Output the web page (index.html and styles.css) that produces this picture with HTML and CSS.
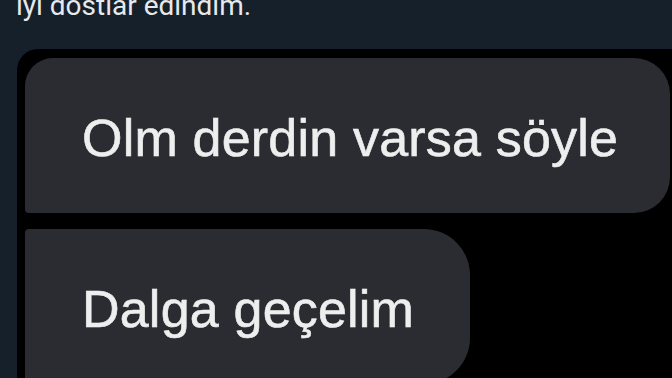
FILE: index.html
```
<!DOCTYPE html>
<html lang="en">
<head>
  <meta charset="UTF-8" />
  <meta name="viewport" content="width=device-width, initial-scale=1.0"/>
  <title>Tweet</title>
  <link rel="stylesheet" href="styles.css">
</head>
<body>

  <div class="tweet">
    <p class="tweet-text">iyi dostlar edindim.</p>

    <div class="media">
      <div class="bubble bubble--wide">
        <p class="bubble-text">Olm derdin varsa söyle</p>
      </div>
      <div class="bubble bubble--short">
        <p class="bubble-text">Dalga geçelim</p>
      </div>
    </div>
  </div>

</body>
</html>
```

FILE: styles.css
```
body {
  font-family: "Liberation Sans", Arial, sans-serif;
  background: #15202b;
  margin: 0;
  padding: 0;
  height: 100vh;
  overflow: hidden;
}

.tweet {
  display: flex;
  flex-direction: column;
}

.tweet-text {
  margin: -10px 0 0 0;
  padding-left: 16px;
  font-family: Roboto, "Liberation Sans", sans-serif;
  font-size: 28px;
  line-height: 32px;
  color: #e7e9ea;
}

.media {
  margin-top: 27px;
  margin-left: 17px;
  padding: 9px 0 0 8px;
  background: #000000;
  border-radius: 21px 0 0 0;
  display: flex;
  flex-direction: column;
  gap: 16px;
  height: 400px;
}

.bubble {
  background: #2b2c31;
  height: 155px;
  box-sizing: border-box;
  padding: 50px 0 0 57px;
}

.bubble--wide {
  width: 645px;
  border-radius: 28px 36px 36px 4px;
}

.bubble--short {
  width: 445px;
  border-radius: 4px 46px 46px 4px;
}

.bubble-text {
  margin: 0;
  font-size: 52px;
  line-height: 60px;
  letter-spacing: 0.2px;
  color: #eeeeee;
  -webkit-text-stroke: 0.6px #eeeeee;
}
```
